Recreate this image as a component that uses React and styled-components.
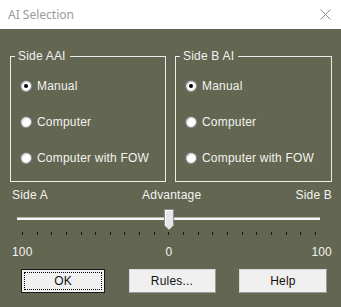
import React, { useState } from 'react';
import styled, { createGlobalStyle } from 'styled-components';

const GlobalStyle = createGlobalStyle`
  html, body {
    margin: 0;
    padding: 0;
    background: #636650;
  }
  body {
    font-family: "Liberation Sans", Arial, sans-serif;
  }
`;

const Window = styled.div`
  width: 341px;
  height: 307px;
  display: flex;
  flex-direction: column;
  background: #636650;
  overflow: hidden;
`;

const TitleBar = styled.div`
  height: 29px;
  flex: none;
  box-sizing: border-box;
  padding: 0 10px 0 8px;
  background: #fff;
  display: flex;
  align-items: center;
  justify-content: space-between;
  font-family: "Noto Sans", sans-serif;
  font-size: 12px;
  color: #9a9a9a;
`;

const Body = styled.div`
  flex: 1;
  display: flex;
  flex-direction: column;
  padding: 20px 9px 0 10px;
  color: #f2f2f2;
  font-size: 12px;
  line-height: 14px;
  letter-spacing: 0.2px;
`;

const Groups = styled.div`
  display: grid;
  grid-template-columns: 156px 157px;
  column-gap: 9px;
`;

const Group = styled.fieldset`
  margin: 0;
  padding: 15px 0 15px 0;
  min-width: 0;
  border: 1px solid #ececec;
  & > legend {
    margin-left: 4px;
    padding: 0 4px 0 3px;
    line-height: 14px;
  }
`;

const Options = styled.div`
  display: flex;
  flex-direction: column;
  gap: 20px;
  padding-left: 9px;
`;

const Option = styled.label`
  display: flex;
  align-items: center;
  gap: 5px;
  height: 16px;
  cursor: default;
`;

const RadioDot = styled.span`
  width: 12px;
  height: 12px;
  box-sizing: border-box;
  border-radius: 50%;
  border: 1px solid #8a8a8a;
  border-top-color: #6e6e6e;
  border-left-color: #6e6e6e;
  background: #fff;
  box-shadow: inset 1px 1px 1px #c8c8c8;
  display: flex;
  align-items: center;
  justify-content: center;
  &::after {
    content: '';
    width: 4px;
    height: 4px;
    border-radius: 50%;
    background: ${p => (p.$on ? '#000' : 'transparent')};
  }
`;

const LabelRow = styled.div`
  margin-top: 6px;
  padding-left: 2px;
  display: flex;
  justify-content: space-between;
`;

const Slider = styled.div`
  position: relative;
  height: 22px;
  box-sizing: border-box;
  padding-top: 8px;
  margin: 7px 12px 0 7px;
`;

const Track = styled.div`
  height: 3px;
  box-sizing: border-box;
  border-top: 1px solid #b4b4aa;
  background: #f6f6f6;
`;

const Thumb = styled.svg`
  position: absolute;
  top: 0;
  margin-left: -5px;
`;

const Ticks = styled.div`
  margin: 1px 16px 0 12px;
  height: 4px;
  display: flex;
  justify-content: space-between;
`;

const Tick = styled.span`
  width: 1px;
  height: 3px;
  background: #141414;
`;

const ScaleRow = styled.div`
  margin-top: 9px;
  padding: 0 6px 0 2px;
  display: grid;
  grid-template-columns: 1fr auto 1fr;
  & > span:last-child {
    text-align: right;
    margin-right: -6px;
  }
`;

const Buttons = styled.div`
  margin-top: 10px;
  padding: 0 5px 0 11px;
  display: flex;
  justify-content: space-between;
`;

const Button = styled.button`
  width: ${p => p.$w}px;
  height: 24px;
  box-sizing: border-box;
  padding: 0;
  background: #f0f0f0;
  color: #111;
  font-family: "Liberation Sans", Arial, sans-serif;
  font-size: 12px;
  letter-spacing: 0.2px;
  border: 1px solid;
  border-color: ${p => (p.$default ? '#1a1a1a' : '#dadada #9a9a9a #9a9a9a #dadada')};
  outline: ${p => (p.$default ? '1px dotted #000' : 'none')};
  outline-offset: -4px;
`;

const Close = () => (
  <svg width="11" height="11" viewBox="0 0 11 11">
    <path d="M0.5 0.5 L10.5 10.5 M10.5 0.5 L0.5 10.5" stroke="#8a8a8a" strokeWidth="1" fill="none" />
  </svg>
);

const sides = [
  { key: 'a', title: 'Side AAI' },
  { key: 'b', title: 'Side B AI' },
];
const modes = ['Manual', 'Computer', 'Computer with FOW'];

export default function App() {
  const [choice, setChoice] = useState({ a: 0, b: 0 });
  const [advantage] = useState(0); // -100 .. 100

  return (
    <Window>
      <GlobalStyle />
      <TitleBar>
        <span>AI Selection</span>
        <Close />
      </TitleBar>
      <Body>
        <Groups>
          {sides.map(s => (
            <Group key={s.key}>
              <legend>{s.title}</legend>
              <Options>
                {modes.map((m, i) => (
                  <Option key={m} onClick={() => setChoice({ ...choice, [s.key]: i })}>
                    <RadioDot $on={choice[s.key] === i} />
                    {m}
                  </Option>
                ))}
              </Options>
            </Group>
          ))}
        </Groups>

        <LabelRow>
          <span>Side A</span>
          <span>Advantage</span>
          <span>Side B</span>
        </LabelRow>

        <Slider>
          <Track />
          <Thumb width="10" height="22" viewBox="0 0 10 22" style={{ left: `${(advantage + 100) / 2}%` }}>
            <path d="M0.5 0.5 H9.5 V16.5 L5 21 L0.5 16.5 Z" fill="#e6e6e6" stroke="#8c8c8c" />
            <path d="M1.5 16 V1.5 H8.5" fill="none" stroke="#ffffff" />
          </Thumb>
        </Slider>
        <Ticks>
          {Array.from({ length: 21 }, (_, i) => <Tick key={i} />)}
        </Ticks>

        <ScaleRow>
          <span>100</span>
          <span>0</span>
          <span>100</span>
        </ScaleRow>

        <Buttons>
          <Button $w={84} $default>OK</Button>
          <Button $w={87}>Rules...</Button>
          <Button $w={88}>Help</Button>
        </Buttons>
      </Body>
    </Window>
  );
}
